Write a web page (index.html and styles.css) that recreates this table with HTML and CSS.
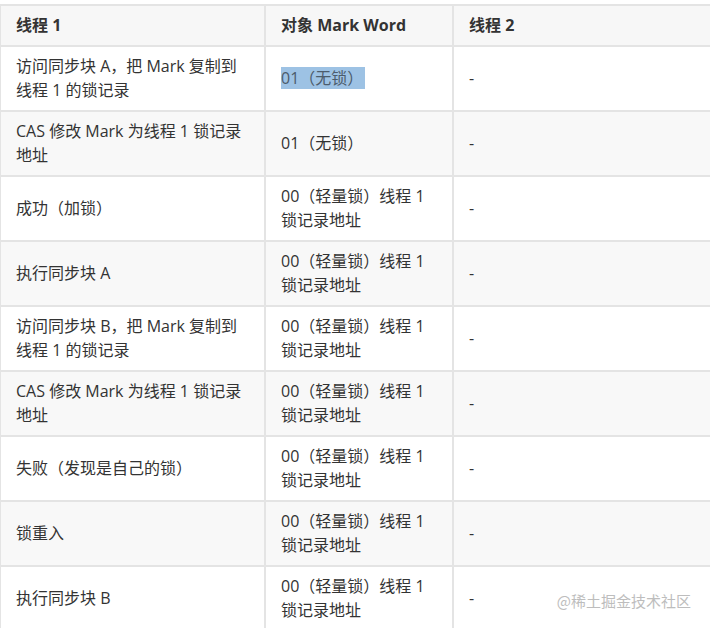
FILE: index.html
```html
<!DOCTYPE html>
<html lang="zh">
<head>
<meta charset="utf-8">
<link rel="stylesheet" href="styles.css">
</head>
<body>
<div class="page">
  <table class="lock-table">
    <colgroup>
      <col class="c1">
      <col class="c2">
      <col class="c3">
    </colgroup>
    <thead>
      <tr><th>线程 1</th><th>对象 Mark Word</th><th>线程 2</th></tr>
    </thead>
    <tbody>
      <tr><td>访问同步块 A，把 Mark 复制到线程 1 的锁记录</td><td><span class="sel">01（无锁）</span></td><td>-</td></tr>
      <tr><td>CAS 修改 Mark 为线程 1 锁记录地址</td><td>01（无锁）</td><td>-</td></tr>
      <tr><td>成功（加锁）</td><td>00（轻量锁）线程 1 锁记录地址</td><td>-</td></tr>
      <tr><td>执行同步块 A</td><td>00（轻量锁）线程 1 锁记录地址</td><td>-</td></tr>
      <tr><td>访问同步块 B，把 Mark 复制到线程 1 的锁记录</td><td>00（轻量锁）线程 1 锁记录地址</td><td>-</td></tr>
      <tr><td>CAS 修改 Mark 为线程 1 锁记录地址</td><td>00（轻量锁）线程 1 锁记录地址</td><td>-</td></tr>
      <tr><td>失败（发现是自己的锁）</td><td>00（轻量锁）线程 1 锁记录地址</td><td>-</td></tr>
      <tr><td>锁重入</td><td>00（轻量锁）线程 1 锁记录地址</td><td>-</td></tr>
      <tr><td>执行同步块 B</td><td>00（轻量锁）线程 1 锁记录地址</td><td>-</td></tr>
    </tbody>
  </table>
  <div class="watermark">@稀土掘金技术社区</div>
</div>
</body>
</html>
```
FILE: styles.css
```css
html, body {
  margin: 0;
  padding: 0;
  background: #fff;
}
.page {
  position: relative;
  width: 710px;
  height: 628px;
  overflow: hidden;
  padding-top: 4px;
  box-sizing: border-box;
  font-family: "Open Sans", "Noto Sans CJK SC", sans-serif;
  font-size: 16px;
  color: #333;
}
.lock-table {
  border-collapse: collapse;
  table-layout: fixed;
  width: 780px;
  margin-left: -1px;
}
.c1 { width: 265px; }
.c2 { width: 188px; }
.c3 { width: 327px; }
.lock-table th,
.lock-table td {
  border: 2px solid #e4e4e4;
  padding: 7px 14px 8px 15px;
  line-height: 24px;
  text-align: left;
  vertical-align: middle;
  word-break: break-all;
}
.lock-table th {
  font-weight: 700;
  background: #f7f7f7;
}
.lock-table td {
  height: 48px;
}
.lock-table tbody tr:nth-child(even) td {
  background: #f8f8f8;
}
.sel {
  background: #9dc2e4;
  color: #4c5c6c;
  padding-right: 2px;
}
.watermark {
  position: absolute;
  right: 19px;
  bottom: 17px;
  font-size: 15px;
  color: #bdbdbd;
  font-family: "Noto Sans CJK SC", sans-serif;
}
```
